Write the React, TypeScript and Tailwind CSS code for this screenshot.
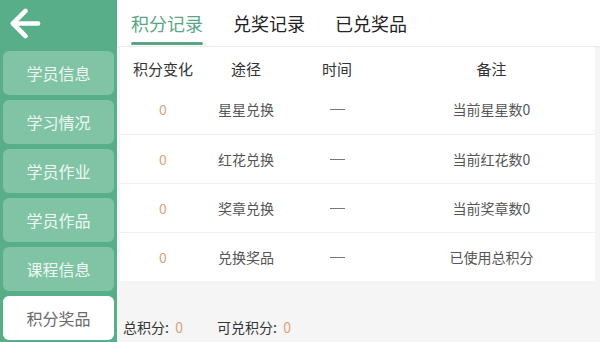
import { ArrowLeft } from 'lucide-react';

const MENU = ['学员信息', '学习情况', '学员作业', '学员作品', '课程信息', '积分奖品'];
const TABS = ['积分记录', '兑奖记录', '已兑奖品'];

const ROWS = [
  { change: '0', way: '星星兑换', note: '当前星星数0' },
  { change: '0', way: '红花兑换', note: '当前红花数0' },
  { change: '0', way: '奖章兑换', note: '当前奖章数0' },
  { change: '0', way: '兑换奖品', note: '已使用总积分' },
];

export default function App() {
  const active = '积分奖品';
  return (
    <div
      className="w-[600px] h-[342px] flex overflow-hidden bg-[#f5f5f5]"
      style={{ fontFamily: '"Noto Sans CJK SC", "Noto Sans", sans-serif' }}
    >
      {/* Sidebar */}
      <div className="w-[117px] flex-shrink-0 flex flex-col bg-[#58ae89]">
        <div className="h-[46px] flex items-center pl-[4px]">
          <ArrowLeft className="w-[43px] h-[43px] text-white" strokeWidth={2.6} />
        </div>
        <div className="flex flex-col gap-[5px] px-[3px] pt-[5px]">
          {MENU.map((m) => (
            <div
              key={m}
              className={`h-[44px] rounded-md flex items-center justify-center text-[16px] ${
                m === active ? 'bg-white text-[#6b6b6b]' : 'bg-[#80c4a5] text-[#eef8f3]'
              }`}
            >
              {m}
            </div>
          ))}
        </div>
      </div>

      {/* Main */}
      <div className="flex-1 flex flex-col min-w-0">
        <div className="h-[46px] bg-white flex items-stretch gap-[30px] pl-[14px] shadow-[0_1px_2px_rgba(0,0,0,0.06)]">
          {TABS.map((t, i) => (
            <div key={t} className="relative flex items-center">
              <span className={`text-[18px] ${i === 0 ? 'text-[#5aa586]' : 'text-[#222]'}`}>{t}</span>
              {i === 0 && (
                <div className="absolute left-0 right-0 bottom-[1px] h-[3px] rounded-full bg-[#5aa586]" />
              )}
            </div>
          ))}
        </div>

        <div className="flex-1 flex flex-col pl-[3px] pr-[5px]">
          <div className="bg-white mt-[1px]">
            <div className="grid grid-cols-[86px_80px_102px_1fr] h-[38px] pt-[6px] items-center text-[15px] text-[#333] text-center">
              <div>积分变化</div>
              <div>途径</div>
              <div>时间</div>
              <div>备注</div>
            </div>
            {ROWS.map((r, i) => (
              <div
                key={r.way}
                className={`grid grid-cols-[86px_80px_102px_1fr] h-[49px] items-center text-[14px] text-[#555] text-center ${
                  i > 0 ? 'border-t border-[#f0f0f0]' : ''
                }`}
              >
                <div className="text-[#dba17c]">{r.change}</div>
                <div>{r.way}</div>
                <div className="flex justify-center">
                  <div className="w-[15px] h-[1px] bg-[#777]" />
                </div>
                <div>{r.note}</div>
              </div>
            ))}
          </div>

          <div className="mt-[36px] flex items-center gap-[34px] pl-[3px] text-[14px] text-[#333]">
            <div>
              总积分:&nbsp;&nbsp;<span className="text-[#dba17c]">0</span>
            </div>
            <div>
              可兑积分:&nbsp;&nbsp;<span className="text-[#dba17c]">0</span>
            </div>
          </div>
        </div>
      </div>
    </div>
  );
}
